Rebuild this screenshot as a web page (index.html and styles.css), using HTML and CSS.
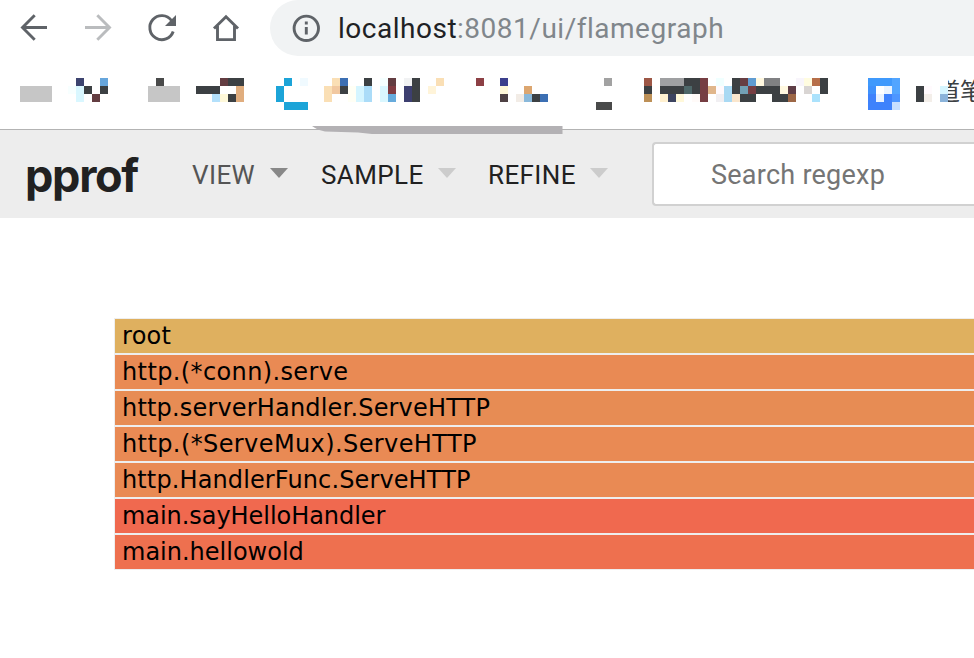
FILE: index.html
```
<!DOCTYPE html>
<html lang="en">
<head>
<meta charset="utf-8">
<title>pprof</title>
<link rel="stylesheet" href="styles.css">
</head>
<body>
<div class="toolbar">
  <svg class="nav" width="270" height="56" fill="none" stroke="#5f6368" stroke-width="2.9">
    <path d="M47 27.500H23M34.700 15.200L22.500 27.500l12.200 12.200"/>
    <path stroke="#babcbe" d="M85 27.500h24M97.300 15.200L109.500 27.500l-12.200 12.200"/>
    <path d="M171.500 20.500A12 12 0 1 0 173.200 31.500"/>
    <path fill="#5f6368" stroke="none" d="M176 15v11h-11z"/>
    <path d="M214 28.500L226 16.700l12 11.800M217.500 26v13.600h17V26"/>
  </svg>
  <div class="address">
    <svg class="info" width="28" height="28" fill="none" stroke="#5f6368" stroke-width="2.900"><circle cx="14.300" cy="14.300" r="12.200"/><path d="M14.300 13v7.500M14.300 7.500v3"/></svg>
    <span class="host">localhost</span><span class="path">:8081/ui/flamegraph</span>
  </div>
</div>
<div class="bookmarks">
  <span class="bookmark">道笔</span>
  <svg class="mosaic" width="974" height="80" viewBox="0 56 974 80"></svg>
</div>
<header class="header">
  <h1 class="brand">pprof</h1>
  <div class="menu view"><span>VIEW</span><i class="arrow"></i></div>
  <div class="menu sample"><span>SAMPLE</span><i class="arrow"></i></div>
  <div class="menu refine"><span>REFINE</span><i class="arrow"></i></div>
  <div class="search"><span>Search regexp</span></div>
</header>
<main class="flame">
  <div class="frame root">root</div>
  <div class="frame conn">http.(*conn).serve</div>
  <div class="frame handler">http.serverHandler.ServeHTTP</div>
  <div class="frame mux">http.(*ServeMux).ServeHTTP</div>
  <div class="frame func">http.HandlerFunc.ServeHTTP</div>
  <div class="frame hello">main.sayHelloHandler</div>
  <div class="frame world">main.hellowold</div>
</main>
<script src="mosaic.js"></script>
</body>
</html>
```
FILE: styles.css
```
* { box-sizing: border-box; }
body { margin: 0; width: 974px; height: 658px; overflow: hidden; background: #fff; font-family: Roboto, sans-serif; }
svg { display: block; flex: none; }
.toolbar { display: flex; height: 56px; }
.address { display: flex; align-items: center; flex: 1; height: 56px; padding-left: 22px; border-radius: 28px 0 0 28px; background: #f1f3f4; font-size: 28px; white-space: nowrap; letter-spacing: 0.51px; }
.info { margin-right: 18px; }
.host { color: #202124; }
.path { color: #80868b; }
.bookmarks { position: relative; height: 74px; border-bottom: 1px solid #b3b3b3; }
.bookmark { position: absolute; left: 936px; top: 17px; width: 38px; overflow: hidden; font: 24px/34px "Noto Sans CJK SC", sans-serif; color: #3c4043; white-space: nowrap; }
.mosaic { position: absolute; left: 0; top: 0; z-index: 1; }
.header { display: flex; align-items: center; height: 88px; padding-left: 25px; background: #ededed; color: #212121; font-size: 26px; }
.brand { flex: none; width: 167px; margin: 0; padding-top: 4px; font: bold 45px/50px Inter, sans-serif; letter-spacing: -1.3px; }
.menu { display: flex; flex: none; align-items: center; justify-content: space-between; padding-top: 2px; letter-spacing: 0.4px; }
.menu .arrow { width: 0; height: 0; margin-top: -4px; border: solid transparent; border-width: 10px 9.500px 0; border-top-color: #ccc; }
.view { width: 96px; margin-right: 33px; color: #555; }
.view .arrow { border-top-color: #888; }
.sample { width: 135px; margin-right: 32px; }
.refine { width: 120px; margin-right: 44px; }
.search { display: flex; align-items: center; flex: 1; height: 64px; padding: 2px 0 0 57px; border: 2px solid #d1d1d1; border-right: 0; border-radius: 4px 0 0 4px; background: #fff; color: #757575; font-size: 27px; letter-spacing: 0.25px; }
.flame { display: grid; gap: 2px; margin: 101px 0 0 115px; background: #eee; box-shadow: 0 0 0 1px #eee; }
.frame { height: 34px; padding-left: 7px; font: 24px/34px "DejaVu Sans", sans-serif; color: #000; white-space: nowrap; }
.root { background: #dfb05f; letter-spacing: 0.3px; }
.conn { background: #e98a54; letter-spacing: 0.38px; }
.handler { background: #e78c54; letter-spacing: 0.18px; }
.mux { background: #e98a54; letter-spacing: 0.4px; }
.func { background: #e98a54; letter-spacing: 0.12px; }
.hello { background: #f0694f; letter-spacing: -0.05px; }
.world { background: #ee704f; }
```
FILE: mosaic.js
```
// Bookmark tiles: x, y, width, height, colour
const K = '#3c4043';
const tiles = [
[20,86,32,16,'#c6c6c6'],[76,78,8,8,'#3d446f'],[76,86,8,16,'#d9f7ff'],[68,86,8,8,'#f7ffff'],[84,86,8,8,K],[92,94,8,8,'#633d41'],[100,78,8,8,'#67a6dc'],[100,86,8,8,K],
[148,86,32,16,'#c6c6c6'],[156,78,8,8,'#494a4a'],
[196,86,24,8,K],[220,78,8,8,'#633d41'],[228,78,16,8,K],[236,86,8,16,'#e0ad7e'],[228,94,8,8,K],[212,94,8,8,'#b3e0fb'],[220,94,8,8,'#fef8d9'],
[284,78,8,8,'#1ca4d8'],[276,86,8,16,'#1ca4d8'],[284,102,24,8,'#1ca4d8'],[300,78,8,8,'#f0faff'],
[324,86,8,16,'#fadfb5'],[332,78,8,8,'#fadfb5'],[332,86,8,8,'#f1c8a0'],[340,78,8,8,'#3c6fb3'],[340,86,8,8,K],[348,86,8,16,'#fffff5'],[356,86,8,16,'#d5f5ff'],[364,78,8,8,K],[364,86,8,16,'#abdcf8'],[380,78,8,8,'#f5ffff'],[380,86,8,16,'#d9f7ff'],[388,78,8,8,'#633d41'],[388,86,8,8,'#813c42'],[388,94,8,8,'#67abdc'],[404,78,8,8,'#f1f2f3'],[404,86,8,16,'#3d3f70'],[412,78,8,24,K],[428,86,8,8,'#fff4d9'],[436,78,8,8,'#fadfb5'],
[476,78,8,8,'#8d4045'],[500,78,8,8,'#3c3f8d'],[500,86,8,8,'#fff8d9'],[500,94,8,8,'#4e4144'],[516,94,8,8,'#f2ece6'],[524,86,8,8,'#dca670'],[524,94,8,8,'#89b8da'],[532,94,8,8,K],[540,94,8,8,'#3c6fb3'],
[604,78,8,8,'#a2a2a2'],[596,102,16,8,'#494a4a'],
[644,78,8,8,'#9d5746'],[644,86,8,8,K],[644,94,8,8,'#bd9057'],[660,78,24,8,'#9fa0a2'],[684,78,16,8,K],[660,86,40,8,K],[684,86,8,8,'#4e6769'],[700,78,8,24,'#763e43'],[660,94,8,8,'#fff0cf'],[668,94,8,8,'#3d4460'],[676,94,8,8,'#fff8d9'],[692,94,8,8,'#fffaf8'],[708,86,8,8,'#e0b68b'],[716,78,8,8,'#f0ffff'],[716,86,8,8,'#fffafd'],[716,94,8,8,'#f1eff2'],[724,86,8,16,'#a9d9f3'],[732,78,8,16,K],[732,94,8,8,'#fae6cd'],[740,78,8,8,'#673e43'],[740,86,8,8,'#72a0b5'],[740,94,16,8,K],[748,78,8,8,'#609cd2'],[748,86,8,8,'#763e43'],[756,78,8,8,'#fff8e0'],[764,78,16,8,'#808183'],[756,86,24,8,K],[772,94,16,8,K],[780,86,8,8,'#fff8e0'],[788,86,8,8,'#5e3d46'],[788,94,8,8,'#9d6746'],[796,78,8,8,'#f8f5fb'],[804,78,8,8,'#fffce0'],[804,86,8,8,'#d9d5d3'],[812,78,8,8,'#b66e49'],[812,94,8,8,'#abe2fc'],[820,78,8,16,K],
[868,78,32,8,'#3f99fc'],[868,86,32,8,'#3f91fc'],[868,94,32,16,'#3e82fc'],[892,78,8,16,'#52a5ff'],[892,94,8,8,'#4d96ff'],[876,86,8,8,'#fff'],[884,86,8,8,'#e9f3ff'],[876,94,8,8,'#e8f2ff'],[892,102,8,8,'#c6deff'],
[916,86,8,16,K],[924,86,8,8,'#fffafd'],[924,94,8,8,'#f3eee9'],[932,78,8,32,'#fff'],[940,76,8,10,'#fff'],[940,102,8,8,'#fff'],[940,86,8,8,'#d5f5ff'],[940,94,8,8,'#8ab3da']
];
const svg = document.querySelector('.mosaic');
const shape = (name, attrs) => {
  const el = document.createElementNS('http://www.w3.org/2000/svg', name);
  for (const key in attrs) el.setAttribute(key, attrs[key]);
  svg.appendChild(el);
};
for (const [x, y, width, height, fill] of tiles) shape('rect', { x, y, width, height, fill });
shape('path', { d: 'M312 126H562.500V134H372L358 132.500L325 131.500Q317 130 312 126Z', fill: '#b3b1b4' });
```
